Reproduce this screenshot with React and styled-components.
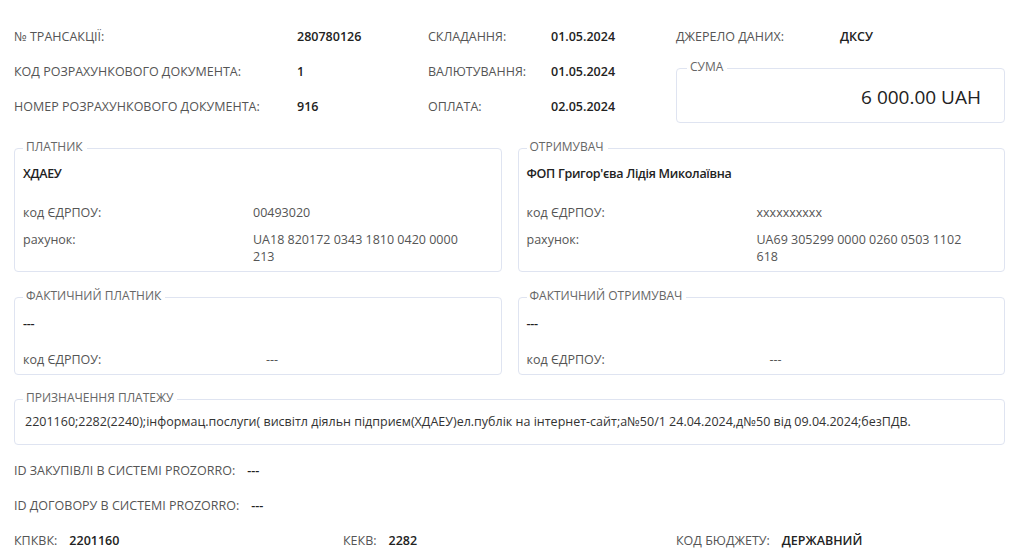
import React from "react";
import styled, { createGlobalStyle } from "styled-components";

const GlobalStyle = createGlobalStyle`
  html, body {
    margin: 0;
    padding: 0;
    background: #ffffff;
  }
  body {
    font-family: "Open Sans", "Noto Sans", sans-serif;
    font-size: 12.5px;
    line-height: 17px;
    color: #222;
  }
`;

const Page = styled.div`
  width: 1005px;
  padding: 19px 0 0 14px;
  box-sizing: border-box;
`;

const TopGrid = styled.div`
  display: grid;
  grid-template-columns: 283px 131px 123px 125px 164px 1fr;
  grid-auto-rows: 35px;
  align-items: center;
`;

const Label = styled.div`
  color: #555;
  white-space: nowrap;
`;

const Value = styled.div`
  color: #222;
  font-weight: 600;
  white-space: nowrap;
`;

const Box = styled.fieldset`
  margin: 0;
  min-width: 0;
  border: 1px solid #dfe4f1;
  border-radius: 4px;
  padding: ${(p) => p.$pad || "7px 8px 6px 8px"};
  box-sizing: border-box;
`;

const Legend = styled.legend`
  padding: 0 4px 4px 3px;
  margin-left: 0;
  font-size: 12px;
  line-height: 17px;
  color: #666;
  text-transform: uppercase;
  text-align: left;
`;

const SumBox = styled(Box)`
  grid-column: 5 / 7;
  grid-row: 2 / 4;
  align-self: start;
  margin-top: 4px;
`;

const Amount = styled.div`
  font-size: 19px;
  line-height: 24px;
  color: #222;
  text-align: right;
`;

const Pair = styled.div`
  display: grid;
  grid-template-columns: 1fr 1fr;
  gap: 16px;
  margin-top: ${(p) => p.$top || "14px"};
`;

const Title = styled.div`
  font-weight: 600;
  letter-spacing: -0.3px;
  color: #222;
  margin-bottom: ${(p) => p.$gap || "22px"};
`;

const Details = styled.div`
  display: grid;
  grid-template-columns: ${(p) => p.$labelWidth || "230px"} 1fr;
  row-gap: 10px;
  padding-right: 20px;
  color: #555;
`;

const Purpose = styled(Box)`
  margin-top: 14px;
`;

const PurposeText = styled.div`
  color: #333;
  padding-left: 2px;
`;

const BottomRow = styled.div`
  display: grid;
  grid-template-columns: ${(p) => p.$cols || "1fr"};
  height: 35px;
  align-items: center;
`;

const Inline = styled.div`
  display: flex;
  gap: 12px;
  align-items: center;
`;

const BottomBlock = styled.div`
  margin-top: 8px;
`;

function Party({ legend, name, code, account, labelWidth, titleGap, pad }) {
  return (
    <Box $pad={pad}>
      <Legend>{legend}</Legend>
      <Title $gap={titleGap}>{name}</Title>
      <Details $labelWidth={labelWidth}>
        <div>код ЄДРПОУ:</div>
        <div>{code}</div>
        {account && (
          <>
            <div>рахунок:</div>
            <div>{account}</div>
          </>
        )}
      </Details>
    </Box>
  );
}

export default function App() {
  return (
    <>
      <GlobalStyle />
      <Page>
        <TopGrid>
          <Label>№ ТРАНСАКЦІЇ:</Label>
          <Value>280780126</Value>
          <Label>СКЛАДАННЯ:</Label>
          <Value>01.05.2024</Value>
          <Label>ДЖЕРЕЛО ДАНИХ:</Label>
          <Value>ДКСУ</Value>

          <Label>КОД РОЗРАХУНКОВОГО ДОКУМЕНТА:</Label>
          <Value>1</Value>
          <Label>ВАЛЮТУВАННЯ:</Label>
          <Value>01.05.2024</Value>
          <SumBox $pad="6px 23px 13px 10px">
            <Legend>Сума</Legend>
            <Amount>6 000.00 UAH</Amount>
          </SumBox>

          <Label>НОМЕР РОЗРАХУНКОВОГО ДОКУМЕНТА:</Label>
          <Value>916</Value>
          <Label>ОПЛАТА:</Label>
          <Value>02.05.2024</Value>
        </TopGrid>

        <Pair $top="14px">
          <Party
            legend="Платник"
            name="ХДАЕУ"
            code="00493020"
            account="UA18 820172 0343 1810 0420 0000 213"
            pad="6px 8px 6px 8px"
          />
          <Party
            legend="Отримувач"
            name="ФОП Григор'єва Лідія Миколаївна"
            code="xxxxxxxxxx"
            account="UA69 305299 0000 0260 0503 1102 618"
            pad="6px 8px 6px 8px"
          />
        </Pair>

        <Pair $top="15px">
          <Party legend="Фактичний платник" name="---" code="---" labelWidth="243px" titleGap="19px" />
          <Party legend="Фактичний отримувач" name="---" code="---" labelWidth="243px" titleGap="19px" />
        </Pair>

        <Purpose $pad="3px 8px 14px 8px">
          <Legend>Призначення платежу</Legend>
          <PurposeText>
            2201160;2282(2240);інформац.послуги( висвітл діяльн підприєм(ХДАЕУ)ел.публік на інтернет-сайт;а№50/1 24.04.2024,д№50 від 09.04.2024;безПДВ.
          </PurposeText>
        </Purpose>

        <BottomBlock>
          <BottomRow>
            <Inline>
              <Label>ID ЗАКУПІВЛІ В СИСТЕМІ PROZORRO:</Label>
              <Value>---</Value>
            </Inline>
          </BottomRow>
          <BottomRow>
            <Inline>
              <Label>ID ДОГОВОРУ В СИСТЕМІ PROZORRO:</Label>
              <Value>---</Value>
            </Inline>
          </BottomRow>
          <BottomRow $cols="329px 333px 1fr">
            <Inline>
              <Label>КПКВК:</Label>
              <Value>2201160</Value>
            </Inline>
            <Inline>
              <Label>КЕКВ:</Label>
              <Value>2282</Value>
            </Inline>
            <Inline>
              <Label>КОД БЮДЖЕТУ:</Label>
              <Value>ДЕРЖАВНИЙ</Value>
            </Inline>
          </BottomRow>
        </BottomBlock>
      </Page>
    </>
  );
}
